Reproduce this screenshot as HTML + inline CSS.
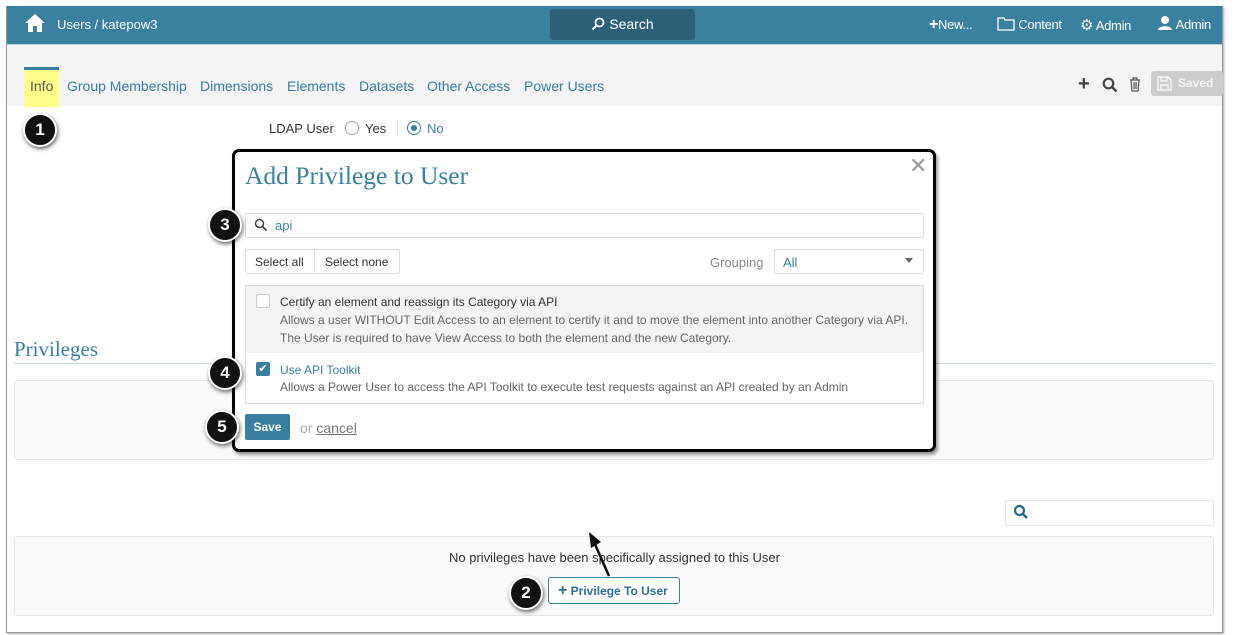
<!DOCTYPE html>
<html><head><meta charset="utf-8"><style>
*{box-sizing:border-box;margin:0;padding:0}
body{width:1234px;height:635px;background:#fff;font-family:"Liberation Sans",Arial,sans-serif;position:relative;overflow:hidden;font-size:13px;color:#333}
.a{position:absolute}
.frame{left:6px;top:6px;width:1217px;height:627px;border:1px solid #999;border-top:none;box-shadow:1px 1px 2px #aaa}
.hdr{left:7px;top:6px;width:1215px;height:38px;background:#3a809f;color:#fff;font-size:13px}
.tabs{left:7px;top:44px;width:1215px;height:62px;background:#f4f4f4;border-top:1px solid #b8d0dc}
.tab{top:78px;font-size:14px;color:#3a7fa0}
.badge{width:34px;height:34px;border-radius:50%;background:#111;border:2px solid #fff;box-shadow:1px 2px 4px rgba(0,0,0,.6);color:#fff;font-size:17px;font-weight:bold;text-align:center;line-height:30px}
.panel{border:1px solid #e6e6e6;border-radius:4px;background:#fafafa}
</style></head><body>
<div class="a frame"></div>
<div class="a hdr">
  <svg class="a" style="left:17px;top:7px" width="22" height="20" viewBox="0 0 22 20"><path d="M11 1L1 10h3v9h5v-6h4v6h5v-9h3z" fill="#fff"/></svg>
  <div class="a" style="left:50px;top:11px">Users / katepow3</div>
  <div class="a" style="left:543px;top:3px;width:145px;height:31px;background:#2b6077;border-radius:3px;text-align:center;line-height:31px;font-size:14px">
    <svg width="14" height="14" viewBox="0 0 14 14" style="vertical-align:-2px"><circle cx="8.5" cy="5.5" r="4" fill="none" stroke="#fff" stroke-width="1.8"/><path d="M5.5 8.5L1.5 12.5" stroke="#fff" stroke-width="2"/></svg> Search</div>
  <div class="a" style="left:922px;top:10px;font-size:13px;letter-spacing:-0.3px"><b style="font-size:16px">+</b>New...</div>
  <div class="a" style="left:990px;top:11px;letter-spacing:-0.3px"><svg width="18" height="14" viewBox="0 0 18 14" style="vertical-align:-2px"><path d="M1 1h6l1 2h9v10H1z" fill="none" stroke="#fff" stroke-width="1.3"/></svg> Content</div>
  <div class="a" style="left:1073px;top:10px;letter-spacing:-0.3px"><span style="font-size:15px">⚙</span> Admin</div>
  <div class="a" style="left:1150px;top:9px;letter-spacing:-0.3px"><svg width="16" height="16" viewBox="0 0 16 16" style="vertical-align:-2px"><circle cx="8" cy="5" r="4" fill="#fff"/><path d="M1 15c0-5 14-5 14 0z" fill="#fff"/></svg> Admin</div>
</div>
<div class="a tabs"></div>
<div class="a" style="left:24px;top:67px;width:35px;height:40px;background:#fefe88;border-top:3px solid #3a7fa0"></div>
<div class="a tab" style="left:30px;color:#555">Info</div>
<div class="a tab" style="left:67px">Group Membership</div>
<div class="a tab" style="left:200px">Dimensions</div>
<div class="a tab" style="left:287px">Elements</div>
<div class="a tab" style="left:359px">Datasets</div>
<div class="a tab" style="left:427px">Other Access</div>
<div class="a tab" style="left:524px">Power Users</div>
<div class="a" style="left:1078px;top:73px;font-size:20px;font-weight:bold;color:#444">+</div>
<svg class="a" style="left:1102px;top:77px" width="16" height="16" viewBox="0 0 16 16"><circle cx="6.5" cy="6.5" r="4.8" fill="none" stroke="#444" stroke-width="2.2"/><path d="M10 10l4.5 4.5" stroke="#444" stroke-width="2.5"/></svg>
<svg class="a" style="left:1129px;top:77px" width="12" height="15" viewBox="0 0 12 15"><path d="M1 3h10M4 3V1h4v2M2 3l1 11h6l1-11M5 5v7M7 5v7" fill="none" stroke="#555" stroke-width="1.2"/></svg>
<div class="a" style="left:1151px;top:71px;width:72px;height:25px;background:#ccc;border-radius:3px;color:#f4f4f4;font-weight:bold;font-size:12px;line-height:25px;padding-left:27px">Saved</div>
<svg class="a" style="left:1157px;top:76px" width="15" height="15" viewBox="0 0 15 15"><path d="M1 1h10l3 3v10H1z M4 1v4h6V1 M4 14V9h7v5" fill="none" stroke="#f4f4f4" stroke-width="1.4"/></svg>

<div class="a badge" style="left:23px;top:113px">1</div>
<div class="a" style="left:269px;top:121px">LDAP User</div>
<div class="a" style="left:345px;top:121px;width:14px;height:14px;border:1px solid #aaa;border-radius:50%"></div>
<div class="a" style="left:365px;top:121px">Yes</div>
<div class="a" style="left:397px;top:120px;width:1px;height:16px;background:#ddd"></div>
<div class="a" style="left:407px;top:121px;width:14px;height:14px;border:1px solid #3a7fa0;border-radius:50%"><div style="margin:3px;width:6px;height:6px;border-radius:50%;background:#3a7fa0"></div></div>
<div class="a" style="left:427px;top:121px;color:#3a7fa0">No</div>

<div class="a" style="left:14px;top:337px;font-family:'Liberation Serif',serif;font-size:21px;color:#3a7fa0">Privileges</div>
<div class="a" style="left:14px;top:363px;width:1200px;height:1px;background:#c8dce6"></div>
<div class="a panel" style="left:14px;top:380px;width:1200px;height:80px"></div>
<div class="a" style="left:1005px;top:500px;width:209px;height:26px;border:1px solid #e4e4e4;border-radius:2px"></div>
<svg class="a" style="left:1013px;top:504px" width="16" height="16" viewBox="0 0 16 16"><circle cx="6.5" cy="6.5" r="4.5" fill="none" stroke="#2c6a88" stroke-width="2.2"/><path d="M10 10l4 4" stroke="#2c6a88" stroke-width="2.5"/></svg>
<div class="a panel" style="left:14px;top:536px;width:1200px;height:80px"></div>
<div class="a" style="left:449px;top:550px">No privileges have been specifically assigned to this User</div>
<div class="a" style="left:548px;top:577px;width:132px;height:27px;border:1px solid #3a7fa0;border-radius:3px;background:#fff;color:#2e6f8f;font-weight:bold;font-size:12px;line-height:25px;padding-left:9px"><span style="font-size:16px">+</span> Privilege To User</div>
<div class="a badge" style="left:509px;top:576px">2</div>
<svg class="a" style="left:585px;top:530px" width="30" height="48" viewBox="0 0 30 48"><path d="M24 46L9 12" stroke="#111" stroke-width="2.5"/><path d="M4 2l2 16 10-6z" fill="#111"/></svg>

<div class="a" style="left:232px;top:149px;width:704px;height:303px;border:3px solid #000;border-radius:7px;background:#fff;box-shadow:2px 3px 3px rgba(0,0,0,.4)"></div>
<div class="a" style="left:245px;top:161px;font-family:'Liberation Serif',serif;font-size:25.5px;color:#3a7fa0">Add Privilege to User</div>
<div class="a" style="left:909px;top:153px;font-size:22px;color:#999">✕</div>
<div class="a" style="left:245px;top:213px;width:679px;height:25px;border:1px solid #ddd;border-radius:2px"></div>
<svg class="a" style="left:254px;top:218px" width="14" height="14" viewBox="0 0 14 14"><circle cx="5.5" cy="5.5" r="4" fill="none" stroke="#444" stroke-width="1.5"/><path d="M8.5 8.5l4 4" stroke="#444" stroke-width="1.8"/></svg>
<div class="a" style="left:275px;top:218px;color:#3a7fa0">api</div>
<div class="a badge" style="left:208px;top:208px">3</div>
<div class="a" style="left:245px;top:249px;width:155px;height:25px;border:1px solid #ddd;border-radius:2px"></div>
<div class="a" style="left:314px;top:249px;width:1px;height:25px;background:#ddd"></div>
<div class="a" style="left:255px;top:255px;font-size:12px">Select all</div>
<div class="a" style="left:325px;top:255px;font-size:12px">Select none</div>
<div class="a" style="left:710px;top:255px;color:#888">Grouping</div>
<div class="a" style="left:774px;top:249px;width:150px;height:25px;border:1px solid #ddd;border-radius:2px;color:#3a7fa0;padding:5px 8px">All</div>
<div class="a" style="left:905px;top:258px;border:4px solid transparent;border-top:5px solid #666"></div>
<div class="a" style="left:245px;top:285px;width:679px;height:119px;border:1px solid #ddd"></div>
<div class="a" style="left:246px;top:286px;width:677px;height:67px;background:#f4f4f4"></div>
<div class="a" style="left:256px;top:294px;width:14px;height:14px;border:1px solid #ccc;border-radius:2px;background:#fff"></div>
<div class="a" style="left:280px;top:295px;font-size:12px">Certify an element and reassign its Category via API</div>
<div class="a" style="left:280px;top:313px;font-size:12px;color:#666">Allows a user WITHOUT Edit Access to an element to certify it and to move the element into another Category via API.</div>
<div class="a" style="left:280px;top:331px;font-size:12px;color:#666">The User is required to have View Access to both the element and the new Category.</div>
<div class="a" style="left:256px;top:362px;width:14px;height:14px;border-radius:2px;background:#3a7fa0;color:#fff;font-size:11px;line-height:14px;text-align:center">✔</div>
<div class="a" style="left:280px;top:363px;font-size:12px;color:#3a7fa0">Use API Toolkit</div>
<div class="a" style="left:280px;top:380px;font-size:12px;color:#666">Allows a Power User to access the API Toolkit to execute test requests against an API created by an Admin</div>
<div class="a badge" style="left:208px;top:356px">4</div>
<div class="a" style="left:245px;top:414px;width:45px;height:26px;background:#3a7fa0;border-radius:2px;color:#fff;font-weight:bold;font-size:12px;text-align:center;line-height:26px">Save</div>
<div class="a" style="left:300px;top:420px;color:#aaa;font-size:14px">or <span style="color:#777;text-decoration:underline">cancel</span></div>
<div class="a badge" style="left:205px;top:410px">5</div>
</body></html>
